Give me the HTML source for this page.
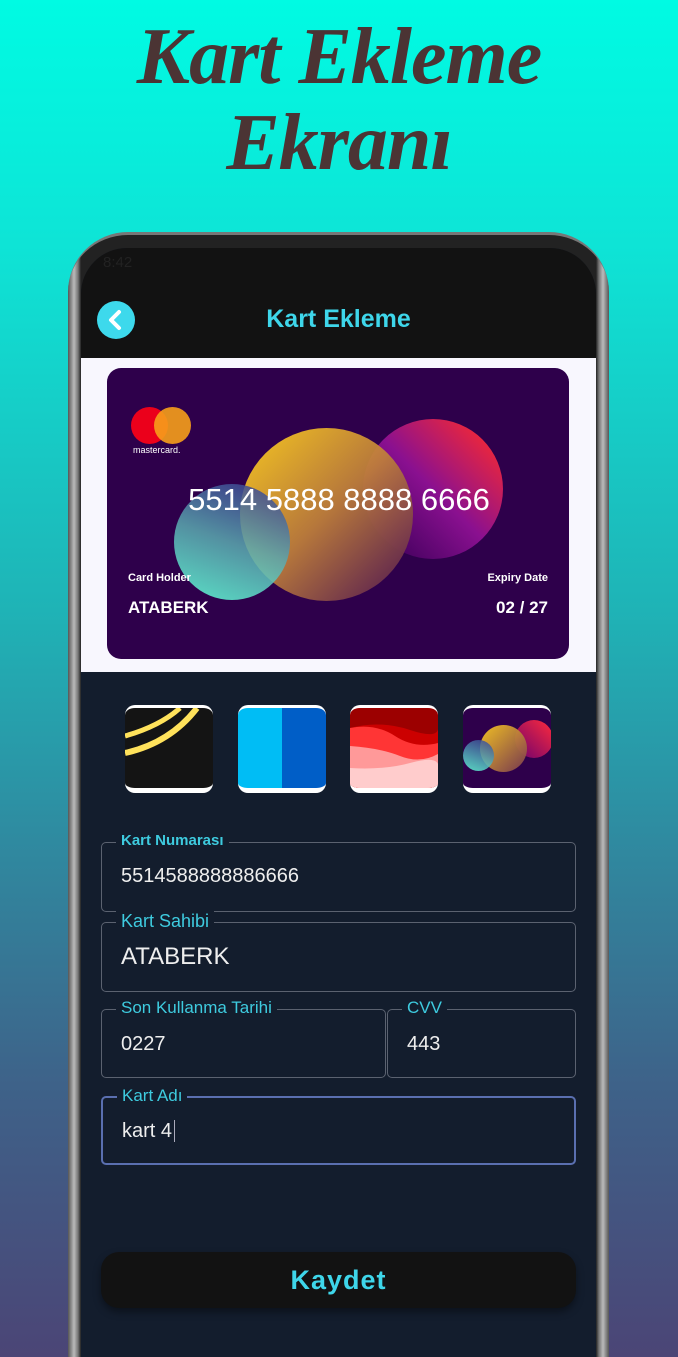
<!DOCTYPE html>
<html style="width:678px;height:1357px;overflow:hidden"><head><meta charset="utf-8"><style>
*{margin:0;padding:0;box-sizing:border-box}
body{width:678px;height:1357px;overflow:hidden;position:relative;font-family:"Liberation Sans",sans-serif;
background:linear-gradient(180deg,#00fbe3 0%,#0ee4d6 18%,#1fb3b6 45%,#2f8aa0 62%,#3e6289 80%,#4b4576 100%)}
.title{position:absolute;left:0;width:678px;text-align:center;color:#4b3434;font-family:"Liberation Serif",serif;font-style:italic;font-weight:bold;font-size:80px;letter-spacing:-1px}
.frame{position:absolute;left:68px;top:232px;width:541px;height:1125px;border-radius:60px 60px 0 0;background:linear-gradient(90deg,#555 0,#bbb 6px,#777 10px,#222 13px,#222 528px,#777 531px,#bbb 535px,#555 541px);border-top:3px solid #777}
.screen{position:absolute;left:81px;top:248px;width:515px;height:1109px;background:#131d2d;border-radius:46px 46px 0 0;overflow:hidden}
.hdr{position:absolute;left:0;top:0;width:515px;height:110px;background:#121212}
.back{position:absolute;left:16px;top:53px;width:38px;height:38px;border-radius:50%;background:#3dd9ec}
.htitle{position:absolute;left:0;width:515px;top:57px;text-align:center;color:#3ed6ea;font-weight:bold;font-size:25px}
.band{position:absolute;left:0;top:110px;width:515px;height:314px;background:#f8f7fe}
.card{position:absolute;left:26px;top:120px;width:462px;height:291px;background:#2e004b;border-radius:14px;overflow:hidden}
.c{position:absolute;border-radius:50%}
.thumb{position:absolute;top:457px;width:88px;height:88px;border-radius:10px;overflow:hidden;border-top:3px solid #fff;border-bottom:5px solid #fff}
.field{position:absolute;border:1.5px solid #5b6270;border-radius:5px}
.lab{position:absolute;top:-12px;left:14px;background:#131d2d;padding:0 5px;color:#3ecbdf;font-size:17px;line-height:20px}
.val{position:absolute;left:19px;color:#eee;font-size:20px}
</style></head><body>
<div class="title" style="top:12px">Kart Ekleme</div>
<div class="title" style="top:98px">Ekranı</div>
<div class="frame"></div>
<div class="screen">
 <div class="hdr">
  <div style="position:absolute;left:22px;top:6px;color:#222;font-size:15px">8:42</div>
  <div class="back"><svg width="38" height="38"><path d="M22 11 L14 19 L22 27" stroke="#fff" stroke-width="4" fill="none" stroke-linecap="round" stroke-linejoin="round"/></svg></div>
  <div class="htitle">Kart Ekleme</div>
 </div>
 <div class="band"></div>
 <div class="card">
  <div class="c" style="left:256px;top:51px;width:140px;height:140px;background:linear-gradient(45deg,#40005c 10%,#8a1090 50%,#ff2b2b 95%)"></div>
  <div class="c" style="left:133px;top:60px;width:173px;height:173px;background:linear-gradient(135deg,#ffce20 5%,#c0803a 50%,#5a1f50 95%);opacity:.93"></div>
  <div class="c" style="left:67px;top:116px;width:116px;height:116px;background:linear-gradient(20deg,#62ffd8 5%,#5aa9b0 50%,#3a3e90 95%);opacity:.85"></div>
  <div class="c" style="left:24px;top:39px;width:37px;height:37px;background:#eb001b"></div>
  <div class="c" style="left:47px;top:39px;width:37px;height:37px;background:#f79e1b;opacity:.9"></div>
  <div style="position:absolute;left:26px;top:77px;color:#fff;font-size:9px">mastercard.</div>
  <div style="position:absolute;left:0;width:462px;top:114px;text-align:center;color:#fff;font-size:31px;padding-left:2px">5514 5888 8888 6666</div>
  <div style="position:absolute;left:21px;top:204px;color:#fff;font-size:11px;font-weight:bold">Card Holder</div>
  <div style="position:absolute;left:21px;top:230px;color:#fff;font-size:17px;font-weight:bold">ATABERK</div>
  <div style="position:absolute;right:21px;top:204px;color:#fff;font-size:11px;font-weight:bold">Expiry Date</div>
  <div style="position:absolute;right:21px;top:230px;color:#fff;font-size:17px;font-weight:bold">02 / 27</div>
 </div>
 <div class="thumb" style="left:44px;background:#141414"><svg width="88" height="80"><path d="M0 45 Q45 35 72 0" stroke="#ffe25b" stroke-width="6" fill="none"/><path d="M0 28 Q35 18 55 0" stroke="#ffe25b" stroke-width="5" fill="none"/></svg></div>
 <div class="thumb" style="left:157px;background:linear-gradient(90deg,#00bdf5 50%,#005ec7 50%)"></div>
 <div class="thumb" style="left:269px;background:#ffcccc"><svg width="88" height="80"><rect width="88" height="80" fill="#9c0000"/><path d="M0 20 Q30 12 60 22 T88 18 V80 H0Z" fill="#cc0000"/><path d="M0 20 Q25 15 45 28 T88 35 V80 H0Z" fill="#ff3535"/><path d="M0 38 Q30 40 50 48 T88 46 V80 H0Z" fill="#ff9999"/><path d="M0 60 Q35 62 60 55 T88 56 V80 H0Z" fill="#ffcccc"/></svg></div>
 <div class="thumb" style="left:382px;background:#2e004b">
  <div class="c" style="left:52px;top:12px;width:38px;height:38px;background:linear-gradient(45deg,#6a0070,#ff2b3b)"></div>
  <div class="c" style="left:17px;top:17px;width:47px;height:47px;background:linear-gradient(135deg,#ffce20,#7a3a50);opacity:.93"></div>
  <div class="c" style="left:0;top:32px;width:31px;height:31px;background:linear-gradient(20deg,#62ffd8,#3a3e90);opacity:.85"></div>
 </div>
 <div class="field" style="left:20px;top:594px;width:475px;height:70px"><div class="lab" style="font-weight:bold;font-size:15px">Kart Numarası</div><div class="val" style="top:22px">5514588888886666</div></div>
 <div class="field" style="left:20px;top:674px;width:475px;height:70px"><div class="lab" style="font-size:18px">Kart Sahibi</div><div class="val" style="top:20px;font-size:24px">ATABERK</div></div>
 <div class="field" style="left:20px;top:761px;width:285px;height:69px"><div class="lab">Son Kullanma Tarihi</div><div class="val" style="top:23px">0227</div></div>
 <div class="field" style="left:306px;top:761px;width:189px;height:69px"><div class="lab">CVV</div><div class="val" style="top:23px">443</div></div>
 <div class="field" style="left:20px;top:848px;width:475px;height:69px;border:2px solid #5a6fb0"><div class="lab">Kart Adı</div><div class="val" style="top:22px">kart 4<span style="border-left:1.5px solid #aab;margin-left:2px"></span></div></div>
 <div style="position:absolute;left:20px;top:1004px;width:475px;height:56px;background:#121212;border-radius:18px;box-shadow:0 4px 8px rgba(0,0,0,.4);text-align:center;color:#3ed6ea;font-weight:bold;font-size:27px;line-height:56px;letter-spacing:1px">Kaydet</div>
</div>
</body></html>
